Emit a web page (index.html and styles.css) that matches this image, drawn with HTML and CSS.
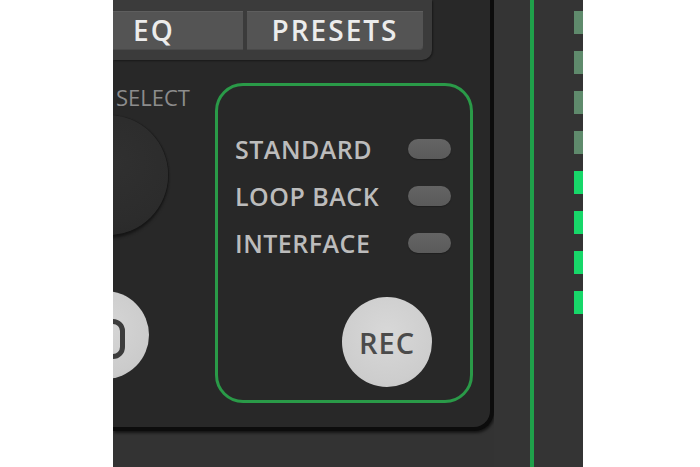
FILE: index.html
```html
<!DOCTYPE html>
<html>
<head>
<meta charset="utf-8">
<link rel="stylesheet" href="styles.css">
</head>
<body>
<div class="device">
  <div class="main">
    <div class="panel">
      <div class="tabs-frame">
        <div class="tab tab-eq">EQ</div>
        <div class="tab tab-presets">PRESETS</div>
      </div>
      <div class="body">
        <div class="left-col">
          <div class="select-label">SELECT</div>
          <div class="knob"></div>
          <div class="round-btn"><div class="round-icon"></div></div>
        </div>
        <div class="mode-box">
          <div class="mode-list">
            <div class="mode-row"><span class="mode-label">STANDARD</span><span class="led"></span></div>
            <div class="mode-row"><span class="mode-label">LOOP BACK</span><span class="led"></span></div>
            <div class="mode-row"><span class="mode-label">INTERFACE</span><span class="led"></span></div>
          </div>
          <div class="rec-wrap"><div class="rec">REC</div></div>
        </div>
      </div>
    </div>
  </div>
  <div class="strip">
    <div class="green-line"></div>
    <div class="meter">
      <span class="seg dim"></span>
      <span class="seg dim"></span>
      <span class="seg dim"></span>
      <span class="seg dim"></span>
      <span class="seg on"></span>
      <span class="seg on"></span>
      <span class="seg on"></span>
      <span class="seg on"></span>
    </div>
  </div>
</div>
</body>
</html>
```
FILE: styles.css
```css
html, body {
  margin: 0;
  padding: 0;
  background: #ffffff;
}
body {
  width: 700px;
  height: 467px;
  overflow: hidden;
  font-family: "Open Sans", "Liberation Sans", sans-serif;
}
.device {
  margin-left: 113px;
  width: 470px;
  height: 467px;
  overflow: hidden;
  background: #333333;
  display: flex;
}
.main {
  width: 381px;
  flex: none;
}
.panel {
  width: 377px;
  height: 427px;
  background: #282828;
  border-right: 4px solid #0c0c0c;
  border-bottom: 4px solid #0c0c0c;
  border-bottom-right-radius: 20px;
  box-shadow: 1px 2px 3px rgba(0,0,0,0.6);
}
.tabs-frame {
  width: 310px;
  height: 39px;
  padding: 11px 9px 10px 0;
  background: #3b3b3b;
  border-bottom-right-radius: 10px;
  display: flex;
  gap: 4px;
  box-shadow: 1px 1px 2px rgba(0,0,0,0.4);
}
.tab {
  height: 39px;
  background: #545454;
  color: #ececec;
  font-weight: 600;
  font-size: 28px;
  line-height: 39px;
  letter-spacing: 2px;
  box-shadow: inset 0 1px 0 #5e5e5e, inset 0 -1px 0 #4a4a4a;
}
.tab-eq {
  width: 130px;
  padding-left: 20px;
  box-sizing: border-box;
}
.tab-presets {
  width: 176px;
  text-align: center;
  border-bottom-right-radius: 4px;
}
.body {
  display: flex;
  padding-top: 23px;
}
.left-col {
  width: 102px;
  flex: none;
  display: flex;
  flex-direction: column;
}
.select-label {
  margin-top: 2px;
  margin-left: 3px;
  color: #8c8c8c;
  font-size: 22px;
  line-height: 24px;
  height: 24px;
}
.knob {
  margin-top: 6px;
  margin-left: -65px;
  width: 120px;
  height: 120px;
  border-radius: 50%;
  background: radial-gradient(circle at 55% 40%, #303030 0%, #2c2c2c 60%, #262626 100%);
  box-shadow: 0 3px 3px #151515, 1px 0 1px #1c1c1c;
}
.round-btn {
  margin-top: 56px;
  margin-left: -52px;
  width: 88px;
  height: 88px;
  border-radius: 50%;
  background: radial-gradient(circle at 50% 40%, #d6d6d6 0%, #cbcbcb 70%, #bdbdbd 100%);
  display: flex;
  align-items: center;
  justify-content: center;
}
.round-icon {
  width: 30px;
  height: 30px;
  border: 5px solid #3c3c3c;
  border-radius: 12px;
  margin-top: 8px;
}
.mode-box {
  width: 252px;
  height: 314px;
  border: 3px solid #2a9a48;
  border-radius: 28px;
  display: flex;
  flex-direction: column;
}
.mode-list {
  padding: 39px 19px 0 17px;
  display: flex;
  flex-direction: column;
}
.mode-row {
  height: 47px;
  display: flex;
  align-items: center;
  justify-content: space-between;
}
.mode-label {
  color: #bcbcbc;
  font-weight: 600;
  font-size: 25px;
  letter-spacing: 0.5px;
}
.led {
  width: 43px;
  height: 20px;
  border-radius: 10px;
  background: linear-gradient(#646464, #5a5a5a);
  box-shadow: 0 1px 1px #1e1e1e;
}
.rec-wrap {
  margin-top: auto;
  padding: 0 38px 13px 0;
  display: flex;
  justify-content: flex-end;
}
.rec {
  width: 90px;
  height: 90px;
  border-radius: 50%;
  background: radial-gradient(circle at 50% 40%, #d8d8d8 0%, #cdcdcd 70%, #c0c0c0 100%);
  color: #4b4b4b;
  font-weight: 600;
  font-size: 29px;
  letter-spacing: 1px;
  display: flex;
  align-items: center;
  justify-content: center;
}
.strip {
  flex: 1;
  display: flex;
  background: #343434;
}
.green-line {
  margin-left: 36px;
  width: 4px;
  height: 467px;
  background: #1fa04a;
}
.meter {
  margin-left: 40px;
  padding-top: 11px;
  display: flex;
  flex-direction: column;
  gap: 17px;
}
.seg {
  width: 12px;
  height: 23px;
  display: block;
}
.seg.dim {
  background: #5f8a6c;
}
.seg.on {
  background: #17d769;
}
```
